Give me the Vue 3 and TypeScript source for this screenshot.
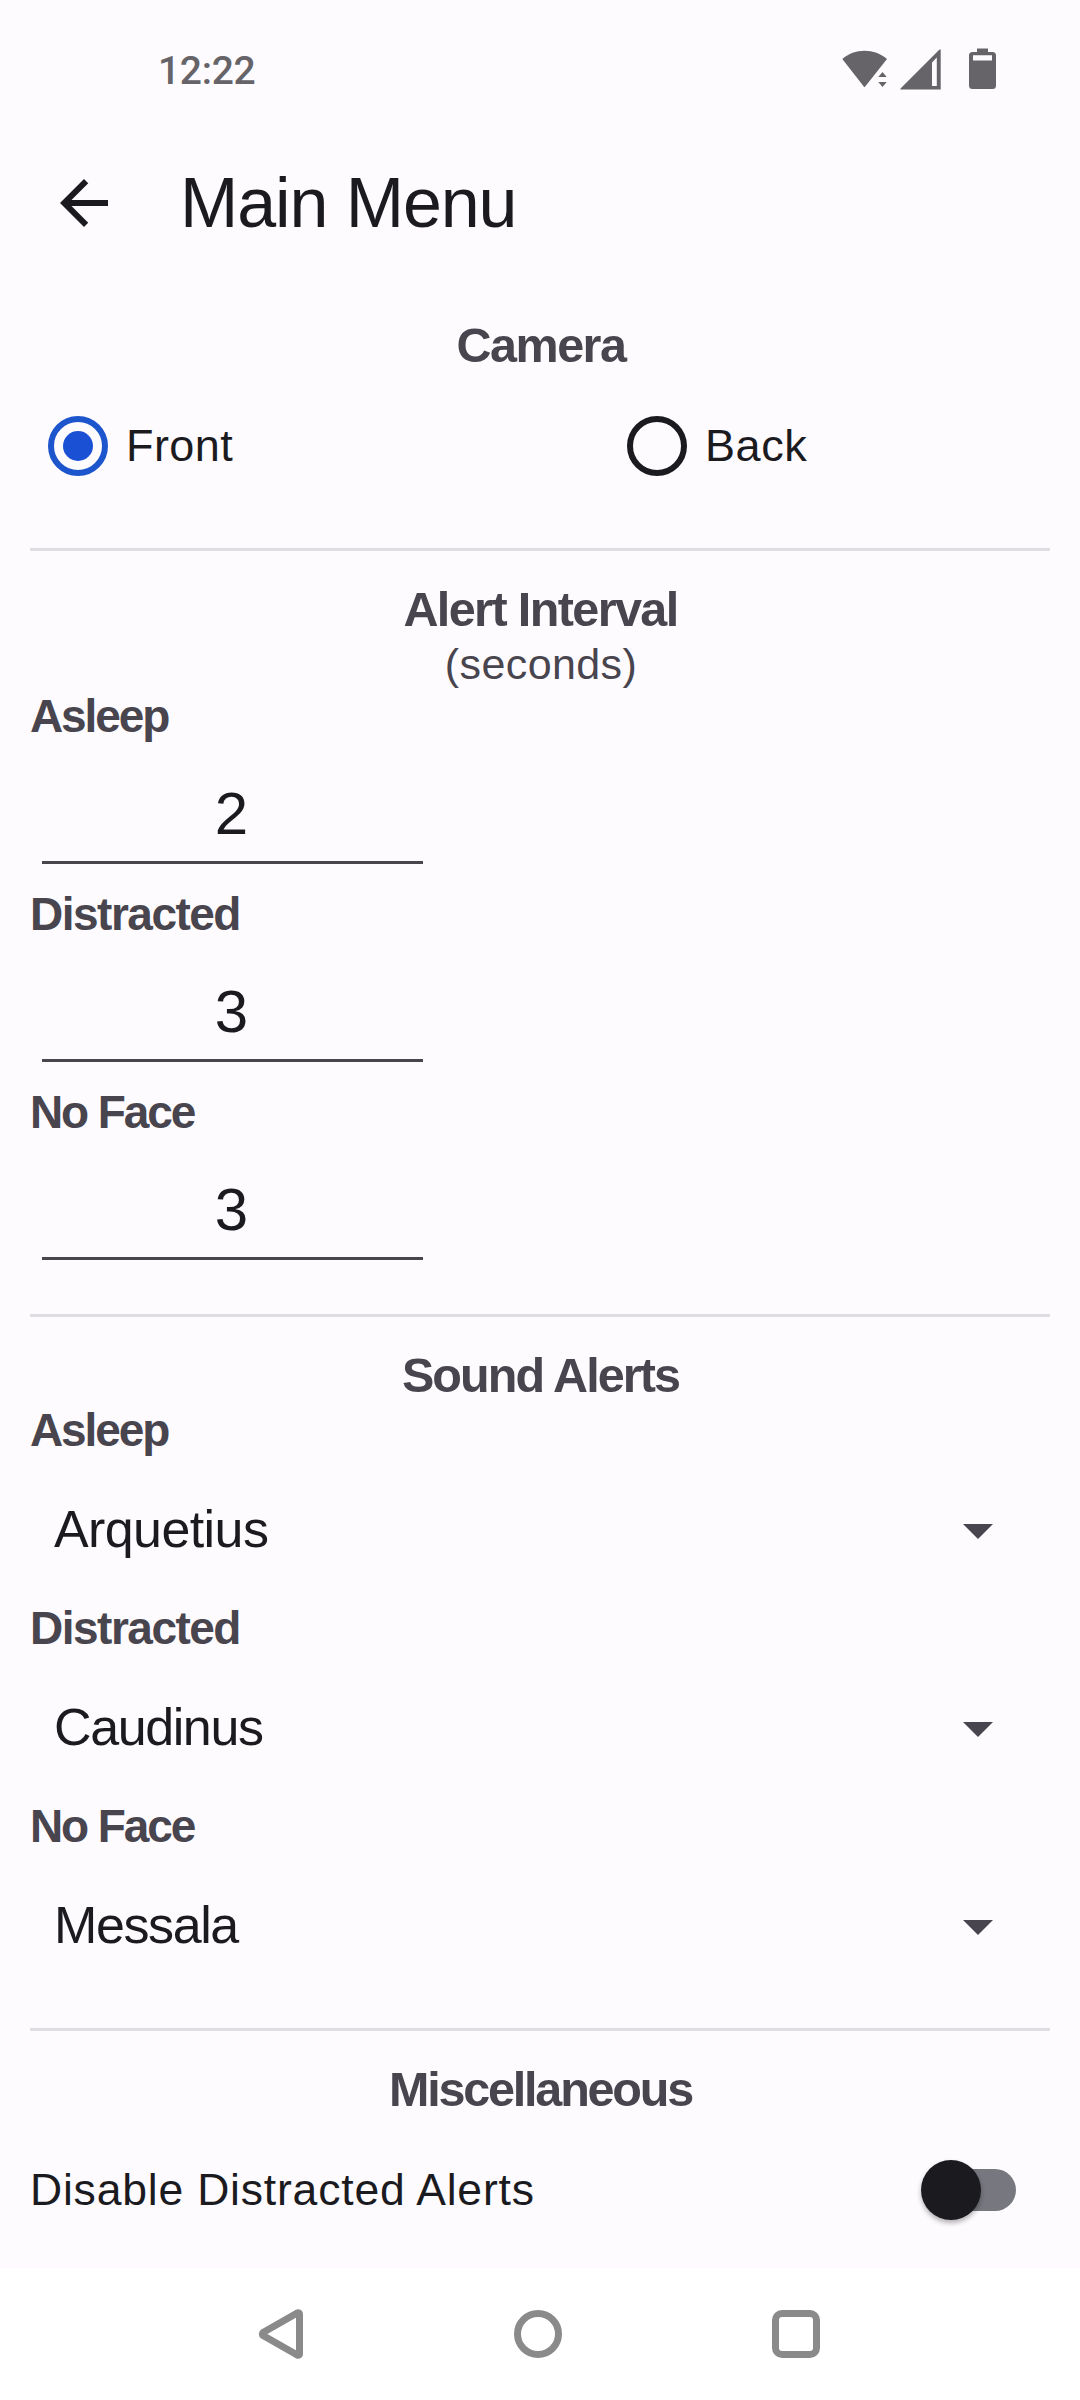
<script setup lang="ts">
import { ref } from 'vue'

interface Interval {
  id: string
  label: string
  value: number
}

interface Sound {
  id: string
  label: string
  sound: string
}

const camera = ref<'front' | 'back'>('front')
const distractedAlertsDisabled = ref(false)

const intervals = ref<Interval[]>([
  { id: 'asleep', label: 'Asleep', value: 2 },
  { id: 'distracted', label: 'Distracted', value: 3 },
  { id: 'no-face', label: 'No Face', value: 3 },
])

const sounds = ref<Sound[]>([
  { id: 'asleep', label: 'Asleep', sound: 'Arquetius' },
  { id: 'distracted', label: 'Distracted', sound: 'Caudinus' },
  { id: 'no-face', label: 'No Face', sound: 'Messala' },
])
</script>

<template>
  <div class="screen">
    <div class="status-bar">
      <span class="clock">12:22</span>
      <div class="status-icons">
        <svg class="wifi" width="46" height="42" viewBox="0 0 46 42">
          <path d="M0.3 10C6.5 4.400 14 1.700 22.500 1.700S38.500 4.400 45 10L22.800 38H22.200z" />
          <path d="M36.300 28l4.200-5 4.200 5zM36.300 33h8.400l-4.200 5z" />
        </svg>
        <svg class="signal" width="41" height="42" viewBox="0 0 41 42">
          <path fill-rule="evenodd" d="M0.500 40.500V39.500L39.500 0.500H40.700V40.500zM32 37H36.800V8.500L32 13.500z" />
        </svg>
        <svg class="battery" width="27" height="42" viewBox="0 0 27 42">
          <path
            fill-rule="evenodd"
            d="M8 0.500H19V4H23.500Q27 4 27 7.500V37.500Q27 41 23.500 41H3.500Q0 41 0 37.500V7.500Q0 4 3.500 4H8zM4 7.200V12.500H23V7.200z"
          />
        </svg>
      </div>
    </div>

    <header class="app-bar">
      <svg class="back" width="72" height="72" viewBox="0 0 24 24">
        <path d="M20 11H7.83l5.590-5.590L12 4l-8 8 8 8 1.410-1.410L7.830 13H20z" />
      </svg>
      <h1 class="title">Main Menu</h1>
    </header>

    <main class="content">
      <section class="group camera">
        <h2 class="heading camera-heading">Camera</h2>
        <div class="radios">
          <div class="radio" :class="{ checked: camera === 'front' }" @click="camera = 'front'">
            <span class="ring"></span><span class="radio-label front">Front</span>
          </div>
          <div class="radio" :class="{ checked: camera === 'back' }" @click="camera = 'back'">
            <span class="ring"></span><span class="radio-label">Back</span>
          </div>
        </div>
      </section>

      <section class="group intervals">
        <h2 class="heading interval-heading">Alert Interval</h2>
        <p class="unit">(seconds)</p>
        <div v-for="item in intervals" :key="item.id" class="interval">
          <div class="label" :class="item.id">{{ item.label }}</div>
          <div class="number">{{ item.value }}</div>
        </div>
      </section>

      <section class="group sounds">
        <h2 class="heading sound-heading">Sound Alerts</h2>
        <div v-for="item in sounds" :key="item.id" class="sound">
          <div class="label" :class="item.id">{{ item.label }}</div>
          <div class="select">
            <span class="choice" :class="item.id">{{ item.sound }}</span>
            <svg class="caret" width="30" height="15" viewBox="0 0 30 15"><path d="M0 0h30L15 15z" /></svg>
          </div>
        </div>
      </section>

      <section class="misc">
        <h2 class="heading misc-heading">Miscellaneous</h2>
        <div class="switch-row" @click="distractedAlertsDisabled = !distractedAlertsDisabled">
          <span class="switch-label">Disable Distracted Alerts</span>
          <span class="switch" :class="{ on: distractedAlertsDisabled }"><span class="thumb"></span></span>
        </div>
      </section>
    </main>

    <nav class="nav-bar">
      <svg width="48" height="50" viewBox="0 0 48 50">
        <path d="M40.800 4.200Q43.500 2.800 43.500 5.500V44.500Q43.500 47.200 40.800 45.800L7.500 26.800Q5 25 7.500 23.200z" />
      </svg>
      <svg width="48" height="50" viewBox="0 0 48 50"><circle cx="24" cy="25" r="20.500" /></svg>
      <svg width="48" height="50" viewBox="0 0 48 50">
        <rect x="3.500" y="4.500" width="41" height="41" rx="6.500" />
      </svg>
    </nav>
  </div>
</template>

<style>
body {
  margin: 0;
}
</style>

<style scoped>
.screen {
  display: flex;
  flex-direction: column;
  width: 1080px;
  height: 2400px;
  overflow: hidden;
  background: #fefbff;
  color: #1b1b1f;
  font-family: 'Liberation Sans', Arial, sans-serif;
}

h1,
h2,
p {
  margin: 0;
}

.status-bar {
  display: flex;
  justify-content: space-between;
  height: 128px;
  padding: 0 84px 0 158px;
  box-sizing: border-box;
  color: #666468;
}

.clock {
  margin-top: 48px;
  font: 500 39px/46px Roboto, sans-serif;
  letter-spacing: -0.3px;
}

.status-icons {
  display: flex;
  margin-top: 48px;
  fill: #666468;
}

.wifi {
  margin-top: 1px;
}

.signal {
  margin-left: 12px;
  margin-top: 1px;
}

.battery {
  margin-left: 28px;
}

.app-bar {
  display: flex;
  align-items: center;
  height: 150px;
  padding-left: 48px;
}

.back {
  fill: #1b1b1f;
}

.title {
  margin: 0 0 1px 60px;
  font-size: 70px;
  line-height: 80px;
  font-weight: 400;
  letter-spacing: -1.1px;
}

.content {
  height: 1990px;
  padding: 0 30px;
}

.group {
  border-bottom: 3px solid #dfdde1;
}

.heading {
  padding-top: 29px;
  font-size: 48.5px;
  line-height: 58px;
  font-weight: 700;
  text-align: center;
  text-indent: 1px;
  color: #48454e;
}

.camera {
  padding: 9px 0 54px;
}

.camera-heading {
  text-indent: 2px;
  letter-spacing: -1.5px;
}

.interval-heading {
  letter-spacing: -1.6px;
}

.sound-heading {
  letter-spacing: -1.9px;
}

.misc-heading {
  letter-spacing: -2.2px;
}

.radios {
  display: flex;
  margin-top: 24px;
}

.radio {
  display: flex;
  align-items: center;
  width: 579px;
  height: 96px;
  padding-left: 18px;
  box-sizing: border-box;
}

.radio + .radio {
  width: 441px;
}

.ring {
  display: flex;
  align-items: center;
  justify-content: center;
  width: 60px;
  height: 60px;
  border: 6px solid #1b1b1f;
  border-radius: 50%;
  box-sizing: border-box;
}

.checked .ring {
  border-color: #1d55cc;
}

.checked .ring::after {
  content: '';
  width: 30px;
  height: 30px;
  border-radius: 50%;
  background: #1a50d4;
}

.radio-label {
  margin-left: 18px;
  font-size: 45px;
  letter-spacing: 0.6px;
}

.front {
  letter-spacing: 0.4px;
}

.intervals {
  padding-bottom: 30px;
}

.unit {
  padding-left: 2px;
  font-size: 43px;
  line-height: 52px;
  text-align: center;
  letter-spacing: 0.4px;
  color: #48454e;
}

.label {
  font-size: 46px;
  line-height: 52px;
  font-weight: 700;
  letter-spacing: -2.1px;
  color: #48454e;
}

.label.distracted {
  letter-spacing: -1.5px;
}

.number {
  width: 381px;
  height: 122px;
  margin: 0 0 24px 12px;
  padding: 42px 2px 0 0;
  box-sizing: border-box;
  border-bottom: 3px solid #48454e;
  font-size: 60px;
  line-height: 60px;
  text-align: center;
}

.sounds {
  padding-bottom: 30px;
}

.select {
  display: flex;
  align-items: center;
  justify-content: space-between;
  height: 146px;
  padding: 0 57px 0 24px;
}

.choice {
  font-size: 52px;
  letter-spacing: -1.4px;
}

.choice.asleep {
  letter-spacing: -0.6px;
}

.caret {
  margin-top: 5px;
  fill: #48454e;
}

.switch-row {
  display: flex;
  align-items: center;
  justify-content: space-between;
  height: 144px;
  padding-right: 34px;
}

.switch-label {
  font-size: 44.5px;
  letter-spacing: 0.8px;
}

.switch {
  display: flex;
  align-items: center;
  width: 90px;
  height: 42px;
  border-radius: 21px;
  background: #777780;
}

.thumb {
  width: 60px;
  height: 60px;
  margin-left: -5px;
  flex: none;
  border-radius: 50%;
  background: #1b1b1f;
  box-shadow: 0 3px 5px rgba(0, 0, 0, 0.3);
}

.on .thumb {
  margin-left: 36px;
}

.nav-bar {
  display: flex;
  gap: 210px;
  height: 132px;
  padding: 41px 0 0 256px;
  box-sizing: border-box;
  background: #fff;
}

.nav-bar svg {
  fill: none;
  stroke: #8a8a8a;
  stroke-width: 7;
  stroke-linejoin: round;
}
</style>
